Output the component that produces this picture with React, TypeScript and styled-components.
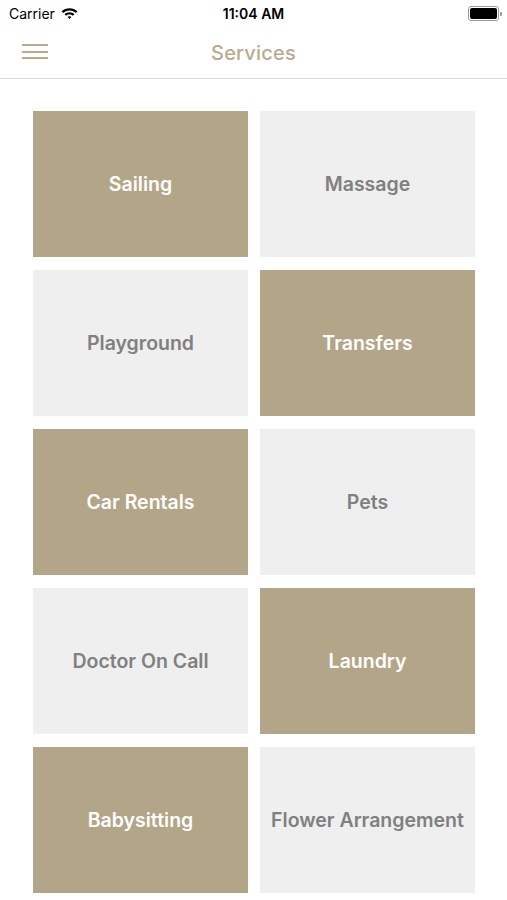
import React from 'react';
import styled, { createGlobalStyle } from 'styled-components';

const GlobalStyle = createGlobalStyle`
    html, body {
        margin: 0;
        padding: 0;
        background: #ffffff;
        font-family: 'Inter', 'Liberation Sans', sans-serif;
    }
`;

interface Service {
    name: string;
    accent: boolean;
}

const services: Service[] = [
    { name: 'Sailing', accent: true },
    { name: 'Massage', accent: false },
    { name: 'Playground', accent: false },
    { name: 'Transfers', accent: true },
    { name: 'Car Rentals', accent: true },
    { name: 'Pets', accent: false },
    { name: 'Doctor On Call', accent: false },
    { name: 'Laundry', accent: true },
    { name: 'Babysitting', accent: true },
    { name: 'Flower Arrangement', accent: false },
];

const WifiIcon = () => (
    <svg width="17" height="13" viewBox="0 0 17 13">
        <path d="M8.5 1.2c3 0 5.8 1.1 7.9 3.1l-1.5 1.6C13.2 4.3 10.9 3.4 8.5 3.4S3.8 4.3 2.1 5.9L0.6 4.3C2.7 2.3 5.5 1.2 8.5 1.2z" fill="#000" />
        <path d="M8.5 5.3c1.9 0 3.6 0.7 4.9 1.9l-1.5 1.6c-0.9-0.8-2.1-1.3-3.4-1.3S6 8 5.1 8.8L3.6 7.2C4.9 6 6.6 5.3 8.5 5.3z" fill="#000" />
        <path d="M8.5 9.3c0.8 0 1.4 0.3 1.9 0.7L8.5 12.1 6.6 10C7.1 9.6 7.7 9.3 8.5 9.3z" fill="#000" />
    </svg>
);

const App = () => {
    return (
        <Screen>
            <GlobalStyle />
            <StatusBar>
                <div className="left">
                    <span className="carrier">Carrier</span>
                    <WifiIcon />
                </div>
                <span className="time">11:04 AM</span>
                <Battery>
                    <div className="body">
                        <div className="level" />
                    </div>
                    <div className="nub" />
                </Battery>
            </StatusBar>
            <NavBar>
                <MenuButton aria-label="menu">
                    <span />
                    <span />
                    <span />
                </MenuButton>
                <Title>Services</Title>
            </NavBar>
            <Grid>
                {services.map((s) => (
                    <Tile key={s.name} $accent={s.accent}>
                        {s.name}
                    </Tile>
                ))}
            </Grid>
        </Screen>
    );
};

export default App;

const Screen = styled.div`
    width: 507px;
    min-height: 900px;
    display: flex;
    flex-direction: column;
    background: #ffffff;
`;

const StatusBar = styled.div`
    height: 27px;
    display: flex;
    align-items: center;
    justify-content: space-between;
    padding: 0 5px 0 9px;
    position: relative;
    .left {
        display: flex;
        align-items: center;
        gap: 6px;
    }
    .carrier {
        font-family: 'Inter', sans-serif;
        font-size: 14px;
        color: #000;
    }
    .time {
        position: absolute;
        left: 0;
        right: 0;
        text-align: center;
        font-family: 'Inter', sans-serif;
        font-weight: 600;
        font-size: 14px;
        color: #000;
        pointer-events: none;
    }
`;

const Battery = styled.div`
    display: flex;
    align-items: center;
    gap: 1px;
    .body {
        width: 27px;
        height: 11px;
        border: 1px solid #9a9a9a;
        border-radius: 3px;
        padding: 1px;
        box-sizing: content-box;
    }
    .level {
        width: 100%;
        height: 100%;
        background: #000;
        border-radius: 2px;
    }
    .nub {
        width: 2px;
        height: 4px;
        background: #9a9a9a;
        border-radius: 0 1px 1px 0;
    }
`;

const NavBar = styled.div`
    height: 51px;
    display: flex;
    align-items: center;
    justify-content: center;
    position: relative;
    border-bottom: 1px solid #dcdcdc;
`;

const MenuButton = styled.button`
    position: absolute;
    left: 22px;
    top: 17px;
    width: 26px;
    padding: 0;
    border: 0;
    background: transparent;
    display: flex;
    flex-direction: column;
    gap: 4.5px;
    span {
        display: block;
        height: 2px;
        background: #b9ab8d;
    }
`;

const Title = styled.span`
    font-family: 'Inter', sans-serif;
    font-weight: 500;
    font-size: 20px;
    color: #b9ab8d;
    letter-spacing: 0.2px;
`;

const Grid = styled.div`
    display: grid;
    grid-template-columns: 215px 215px;
    grid-auto-rows: 146px;
    column-gap: 12px;
    row-gap: 13px;
    padding: 32px 32px 0 33px;
`;

const Tile = styled.div<{ $accent: boolean }>`
    display: flex;
    align-items: center;
    justify-content: center;
    text-align: center;
    background: ${(p) => (p.$accent ? '#b3a587' : '#efefef')};
    color: ${(p) => (p.$accent ? '#ffffff' : '#808080')};
    font-family: 'Inter', sans-serif;
    font-weight: 600;
    font-size: 19.5px;
`;
